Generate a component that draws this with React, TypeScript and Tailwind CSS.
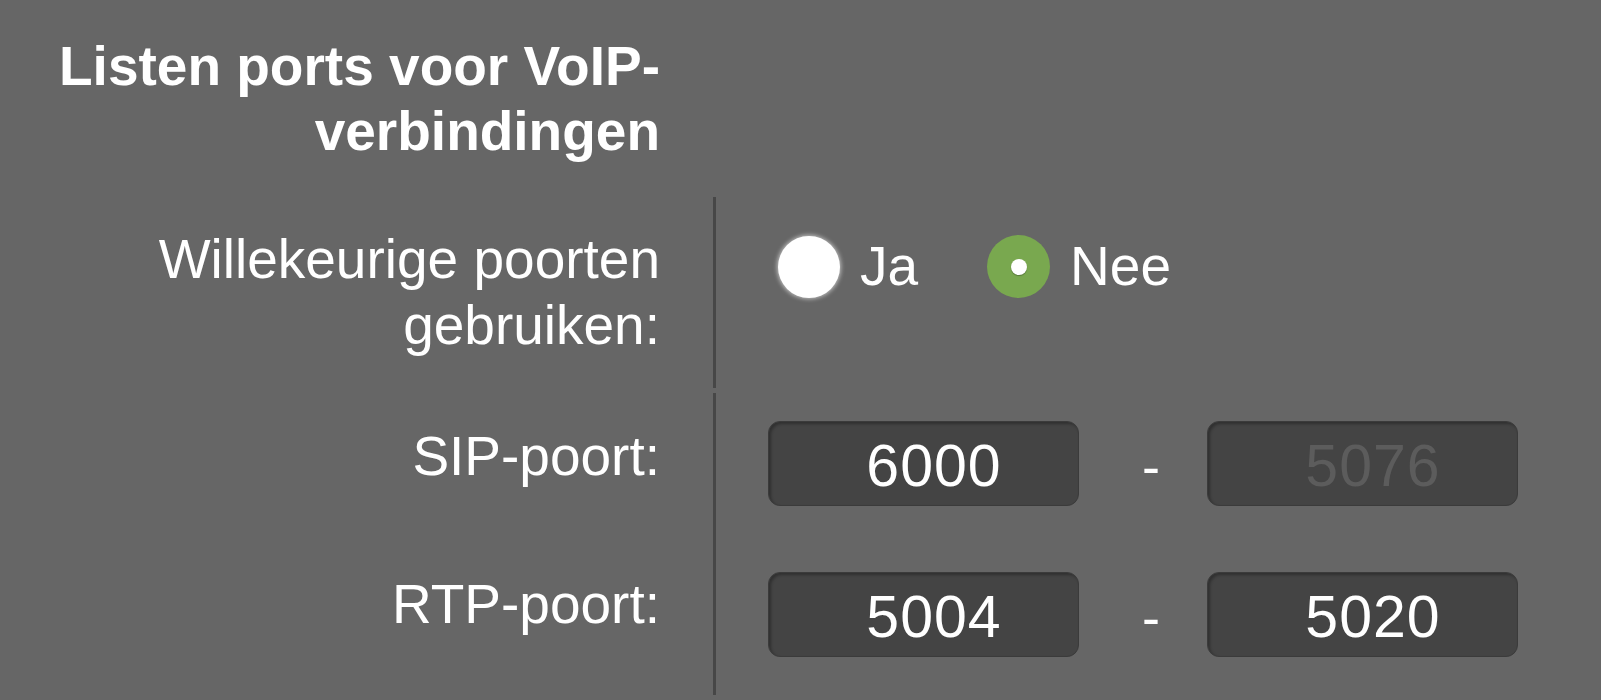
import React from "react";

function Radio({ checked, label }: { checked: boolean; label: string }) {
  return (
    <div className="flex items-center h-[65px]">
      {checked ? (
        <div className="w-[63px] h-[63px] rounded-full bg-[#79a84f] flex items-center justify-center">
          <div className="w-[16px] h-[16px] rounded-full bg-white shadow-[0_1px_1px_rgba(0,0,0,0.3)]" />
        </div>
      ) : (
        <div className="w-[62px] h-[62px] rounded-full bg-white shadow-[0_0_4px_1px_rgba(255,255,255,0.6)]" />
      )}
      <span className="ml-[20px] text-[55px] leading-[65px]">{label}</span>
    </div>
  );
}

function PortBox({ value, disabled }: { value: string; disabled?: boolean }) {
  return (
    <div
      className={
        "w-[311px] h-[85px] rounded-[12px] bg-[#444444] border border-[#3b3b3b] shadow-[inset_2px_2px_3px_rgba(0,0,0,0.3)] text-center pl-[21px] pt-[12px] text-[59px] leading-[65px] tracking-[1px] " +
        (disabled ? "text-[#5c5c5c]" : "text-white")
      }
    >
      {value}
    </div>
  );
}

function PortRow({ label, a, b, bDisabled, labelPt }: { label: string; a: string; b: string; bDisabled?: boolean; labelPt: string }) {
  return (
    <div className="flex h-[151px]">
      <div className={"w-[660px] text-right text-[55px] leading-[65px] " + labelPt}>{label}</div>
      <div className="ml-[53px] border-l-[3px] border-[#474747] pl-[52px] pt-[28px] flex items-start">
        <PortBox value={a} />
        <div className="ml-[63px] w-[18px] mr-[47px] text-[54px] leading-[65px] pt-[13px] text-center">-</div>
        <PortBox value={b} disabled={bDisabled} />
      </div>
    </div>
  );
}

export default function App() {
  return (
    <div className="w-[1601px] h-[700px] bg-[#666666] text-white overflow-hidden font-[family-name:'Liberation_Sans',Arial,sans-serif]">
      <div className="w-[660px] text-right font-bold text-[55px] leading-[65px] pt-[34px]">
        Listen ports voor VoIP-
        <br />
        verbindingen
      </div>
      <div className="flex h-[191px] mt-[33px]">
        <div className="w-[660px] text-right text-[55px] leading-[66px] pt-[29px]">
          Willekeurige poorten
          <br />
          gebruiken:
        </div>
        <div className="ml-[53px] border-l-[3px] border-[#474747] pl-[62px] pt-[37px] flex items-start">
          <Radio checked={false} label="Ja" />
          <div className="ml-[69px]">
            <Radio checked={true} label="Nee" />
          </div>
        </div>
      </div>
      <div className="mt-[5px]">
        <PortRow label="SIP-poort:" a="6000" b="5076" bDisabled labelPt="pt-[31px]" />
        <PortRow label="RTP-poort:" a="5004" b="5020" labelPt="pt-[28px]" />
      </div>
    </div>
  );
}
